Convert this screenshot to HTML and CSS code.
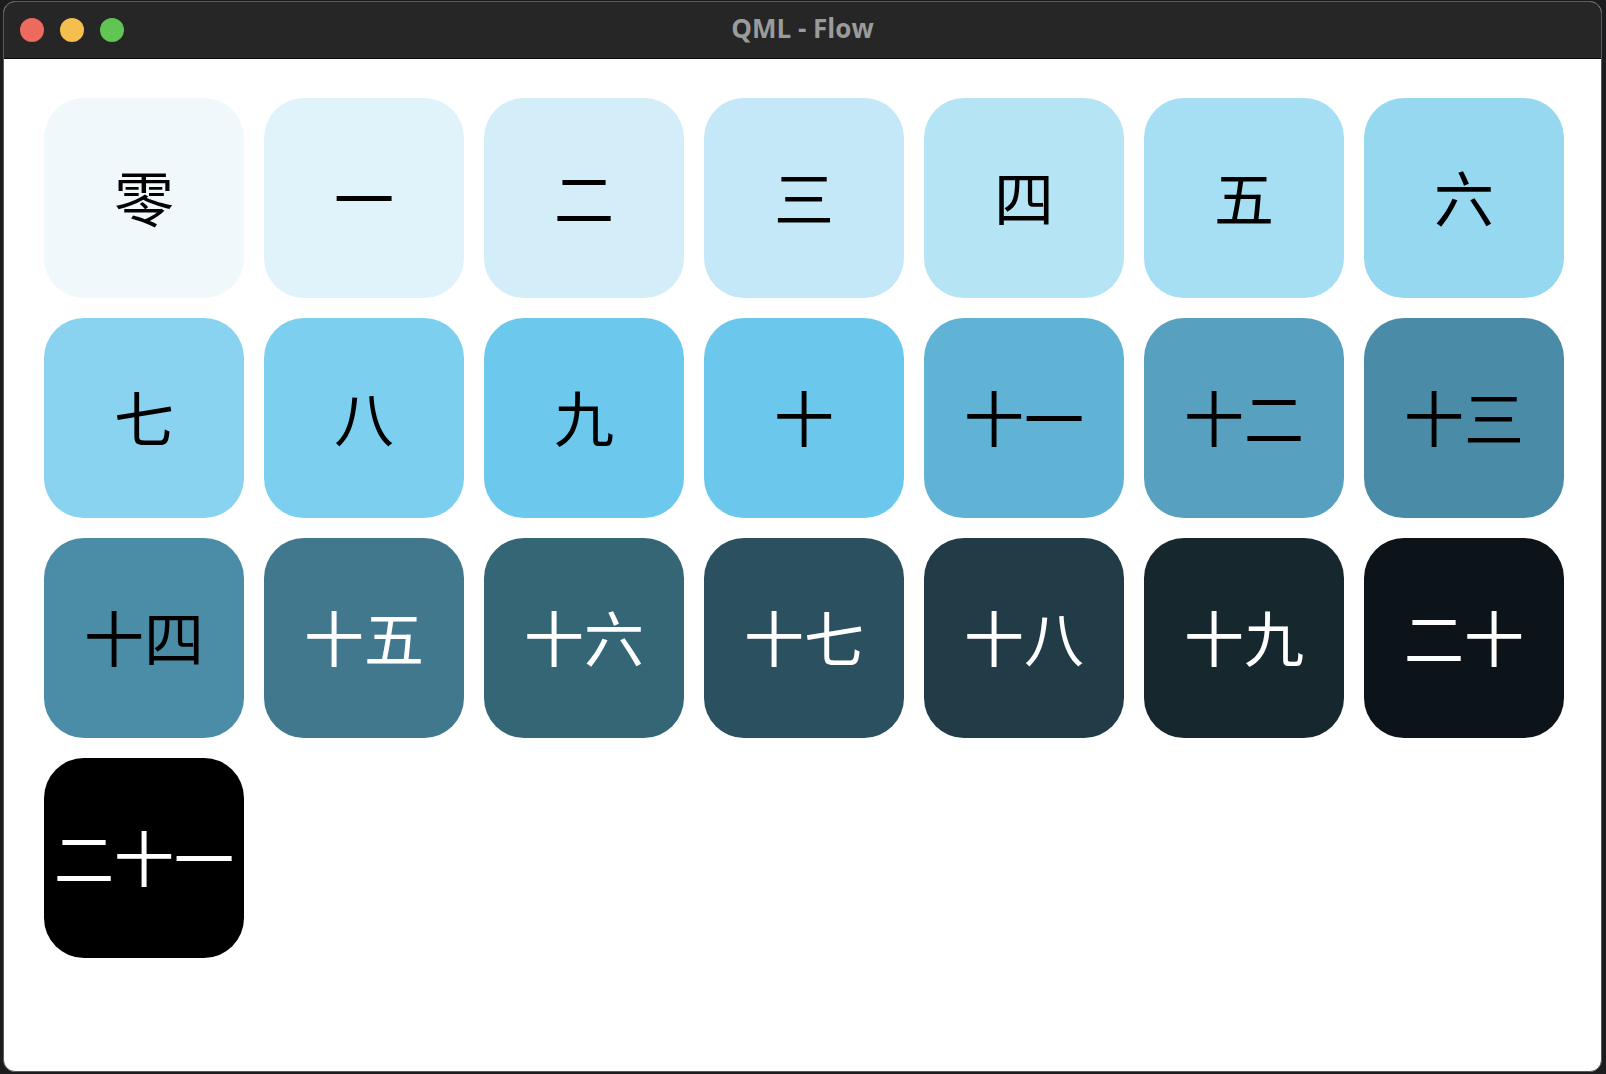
FILE: index.html
```html
<!DOCTYPE html>
<html lang="zh">
<head>
<meta charset="utf-8">
<title>QML - Flow</title>
<link rel="stylesheet" href="styles.css">
</head>
<body>
<div class="window">
  <div class="titlebar">
    <div class="lights">
      <span class="light red"></span>
      <span class="light yellow"></span>
      <span class="light green"></span>
    </div>
    <div class="title">QML - Flow</div>
  </div>
  <div class="content">
    <div class="tile c0">零</div>
    <div class="tile c1">一</div>
    <div class="tile c2">二</div>
    <div class="tile c3">三</div>
    <div class="tile c4">四</div>
    <div class="tile c5">五</div>
    <div class="tile c6">六</div>
    <div class="tile c7">七</div>
    <div class="tile c8">八</div>
    <div class="tile c9">九</div>
    <div class="tile c10">十</div>
    <div class="tile c11">十一</div>
    <div class="tile c12">十二</div>
    <div class="tile c13">十三</div>
    <div class="tile c14">十四</div>
    <div class="tile c15 light-text">十五</div>
    <div class="tile c16 light-text">十六</div>
    <div class="tile c17 light-text">十七</div>
    <div class="tile c18 light-text">十八</div>
    <div class="tile c19 light-text">十九</div>
    <div class="tile c20 light-text">二十</div>
    <div class="tile c21 light-text">二十一</div>
  </div>
</div>
</body>
</html>
```

FILE: styles.css
```css
html, body {
  margin: 0;
  padding: 0;
  height: 100%;
  background: #1c1c1e;
}
body {
  padding: 1px 4px 2px 3px;
  box-sizing: border-box;
  overflow: hidden;
}
.window {
  height: 1071px;
  border: 1px solid #5a5a5a;
  border-radius: 12px;
  overflow: hidden;
  background: #ffffff;
  display: flex;
  flex-direction: column;
  box-sizing: border-box;
}
.titlebar {
  height: 57px;
  flex: none;
  background: #262626;
  border-bottom: 1px solid #0a0a0a;
  position: relative;
  display: flex;
  align-items: center;
  justify-content: center;
  box-sizing: border-box;
}
.lights {
  position: absolute;
  left: 16px;
  top: 16px;
  display: flex;
  gap: 16px;
}
.light {
  width: 24px;
  height: 24px;
  border-radius: 50%;
  display: block;
}
.red { background: #ed6a5e; }
.yellow { background: #f5bf4f; }
.green { background: #61c554; }
.title {
  font-family: "Open Sans", "Liberation Sans", sans-serif;
  font-weight: 700;
  font-size: 26px;
  color: #9b9b9b;
  margin-top: -4px;
  margin-left: 0;
}
.content {
  flex: 1;
  padding: 39px 0 0 40px;
  display: flex;
  flex-wrap: wrap;
  align-content: flex-start;
  gap: 20px;
}
.tile {
  width: 200px;
  height: 200px;
  box-sizing: border-box;
  padding-bottom: 5px;
  border-radius: 40px;
  display: flex;
  align-items: center;
  justify-content: center;
  font-family: "Noto Sans CJK SC", "Noto Sans CJK JP", sans-serif;
  font-size: 60px;
  font-weight: 400;
  color: #000000;
  line-height: 1;
  white-space: nowrap;
}
.light-text { color: #ffffff; }
.c0 { background: #f0f8fc; }
.c1 { background: #e0f3fa; }
.c2 { background: #d3eef9; }
.c3 { background: #c4e8f7; }
.c4 { background: #b5e4f5; }
.c5 { background: #a6def3; }
.c6 { background: #97d8f1; }
.c7 { background: #8ad3f0; }
.c8 { background: #7ccfef; }
.c9 { background: #6dc8ed; }
.c10 { background: #6cc7ec; }
.c11 { background: #61b3d6; }
.c12 { background: #57a0bf; }
.c13 { background: #4a8ca8; }
.c14 { background: #4b8ca7; }
.c15 { background: #41788d; }
.c16 { background: #356676; }
.c17 { background: #2b505f; }
.c18 { background: #213c47; }
.c19 { background: #16272e; }
.c20 { background: #0c1419; }
.c21 { background: #000000; }
```
